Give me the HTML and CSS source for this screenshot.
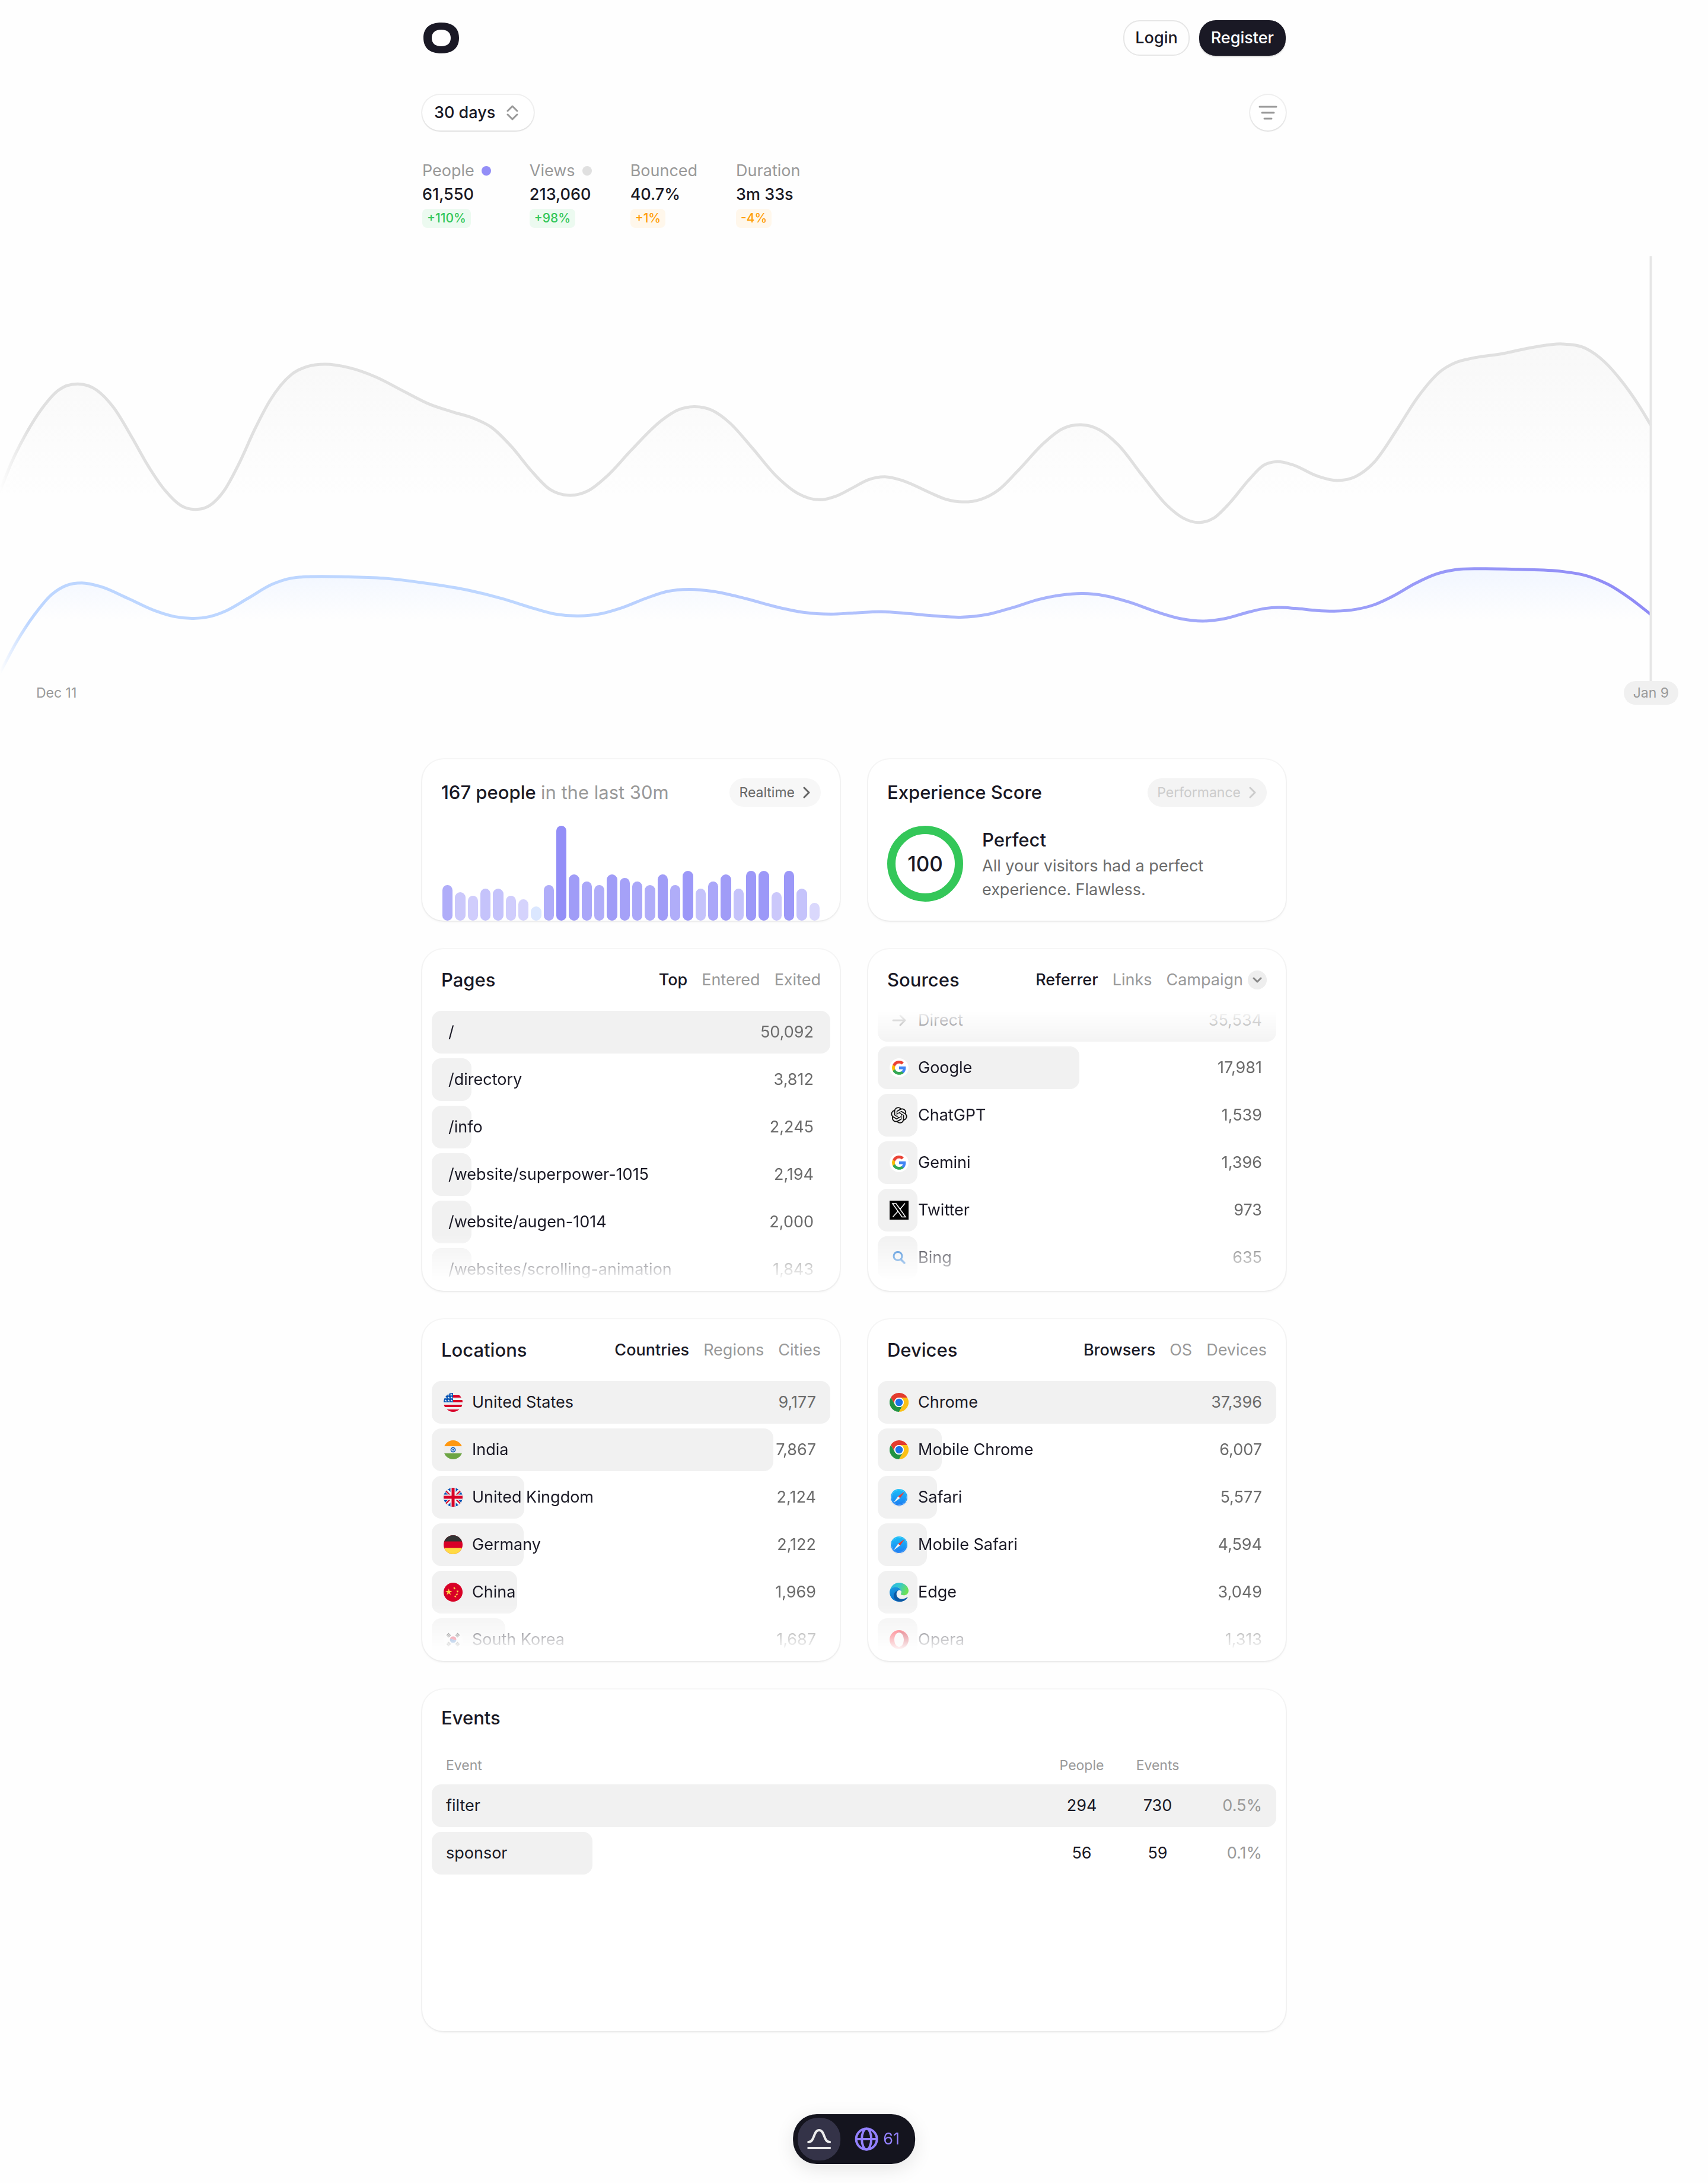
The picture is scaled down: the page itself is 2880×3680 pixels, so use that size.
FILE: index.html
```html
<!DOCTYPE html>
<html lang="en">
<head>
  <meta charset="utf-8">
  <title>Analytics</title>
  <link rel="stylesheet" href="styles.css">
</head>
<body>

<!-- icon set -->
<svg class="sprite" aria-hidden="true">
  <defs>
    <linearGradient id="safariBlue" x1="0" y1="0" x2="0" y2="1">
      <stop offset="0" stop-color="#19c1f8"/>
      <stop offset="1" stop-color="#1d7cf2"/>
    </linearGradient>
    <linearGradient id="edgeTop" x1="0" y1="0" x2="1" y2="0.4">
      <stop offset="0" stop-color="#2bb4e6"/>
      <stop offset="0.5" stop-color="#34c7cf"/>
      <stop offset="1" stop-color="#6be05a"/>
    </linearGradient>
    <linearGradient id="edgeLeft" x1="0" y1="0" x2="0.4" y2="1">
      <stop offset="0" stop-color="#1b9de2"/>
      <stop offset="1" stop-color="#0a6fcb"/>
    </linearGradient>
    <linearGradient id="operaRed" x1="0" y1="0" x2="0" y2="1">
      <stop offset="0" stop-color="#ff1b2d"/>
      <stop offset="1" stop-color="#e0101f"/>
    </linearGradient>
    <clipPath id="round"><circle cx="16" cy="16" r="16"/></clipPath>
  </defs>

  <symbol id="chevron-right" viewBox="0 0 12 20">
    <path d="M2 2l8 8-8 8" fill="none" stroke="currentColor" stroke-width="3" stroke-linecap="round" stroke-linejoin="round"/>
  </symbol>

  <symbol id="google" viewBox="0 0 32 32">
    <circle cx="16" cy="16" r="16" fill="#fff"/>
    <g transform="translate(3 3) scale(1.08)">
      <path fill="#4285f4" d="M22.56 12.25c0-.78-.07-1.53-.2-2.25H12v4.26h5.92c-.26 1.37-1.04 2.53-2.21 3.31v2.77h3.57c2.08-1.92 3.28-4.74 3.28-8.09z"/>
      <path fill="#34a853" d="M12 23c2.97 0 5.46-.98 7.28-2.66l-3.57-2.77c-.98.66-2.23 1.06-3.71 1.06-2.86 0-5.29-1.93-6.16-4.53H2.18v2.84C3.99 20.53 7.7 23 12 23z"/>
      <path fill="#fbbc05" d="M5.84 14.09c-.22-.66-.35-1.36-.35-2.09s.13-1.43.35-2.09V7.07H2.18C1.43 8.55 1 10.22 1 12s.43 3.45 1.18 4.93l2.85-2.22.81-.62z"/>
      <path fill="#ea4335" d="M12 5.38c1.62 0 3.06.56 4.21 1.64l3.15-3.15C17.45 2.09 14.97 1 12 1 7.7 1 3.99 3.47 2.18 7.07l3.66 2.84c.87-2.6 3.3-4.53 6.16-4.53z"/>
    </g>
  </symbol>

  <symbol id="chatgpt" viewBox="-2 -2 28 28">
    <path fill="#111" d="M22.2819 9.8211a5.9847 5.9847 0 0 0-.5157-4.9108 6.0462 6.0462 0 0 0-6.5098-2.9A6.0651 6.0651 0 0 0 4.9807 4.1818a5.9847 5.9847 0 0 0-3.9977 2.9 6.0462 6.0462 0 0 0 .7427 7.0966 5.98 5.98 0 0 0 .511 4.9107 6.051 6.051 0 0 0 6.5146 2.9001A5.9847 5.9847 0 0 0 13.2599 24a6.0557 6.0557 0 0 0 5.7718-4.2058 5.9894 5.9894 0 0 0 3.9977-2.9001 6.0557 6.0557 0 0 0-.7475-7.0729zm-9.022 12.6081a4.4755 4.4755 0 0 1-2.8764-1.0408l.1419-.0804 4.7783-2.7582a.7948.7948 0 0 0 .3927-.6813v-6.7369l2.02 1.1686a.071.071 0 0 1 .038.052v5.5826a4.504 4.504 0 0 1-4.4945 4.4944zm-9.6607-4.1254a4.4708 4.4708 0 0 1-.5346-3.0137l.142.0852 4.783 2.7582a.7712.7712 0 0 0 .7806 0l5.8428-3.3685v2.3324a.0804.0804 0 0 1-.0332.0615L9.74 19.9502a4.4992 4.4992 0 0 1-6.1408-1.6464zM2.3408 7.8956a4.485 4.485 0 0 1 2.3655-1.9728V11.6a.7664.7664 0 0 0 .3879.6765l5.8144 3.3543-2.0201 1.1685a.0757.0757 0 0 1-.071 0l-4.8303-2.7865A4.504 4.504 0 0 1 2.3408 7.872zm16.5963 3.8558L13.1038 8.364 15.1192 7.2a.0757.0757 0 0 1 .071 0l4.8303 2.7913a4.4944 4.4944 0 0 1-.6765 8.1042v-5.6772a.79.79 0 0 0-.407-.667zm2.0107-3.0231l-.142-.0852-4.7735-2.7818a.7759.7759 0 0 0-.7854 0L9.409 9.2297V6.8974a.0662.0662 0 0 1 .0284-.0615l4.8303-2.7866a4.4992 4.4992 0 0 1 6.6802 4.66zM8.3065 12.863l-2.02-1.1638a.0804.0804 0 0 1-.038-.0567V6.0742a4.4992 4.4992 0 0 1 7.3757-3.4537l-.142.0805L8.704 5.459a.7948.7948 0 0 0-.3927.6813zm1.0976-2.3654l2.602-1.4998 2.6069 1.4998v2.9994l-2.5974 1.4997-2.6067-1.4997Z"/>
  </symbol>

  <symbol id="twitter" viewBox="0 0 32 32">
    <rect width="32" height="32" fill="#000"/>
    <path d="M5 5h6l16 22.500h-6zM26 4.500L17.500 14.500M14 18L5.500 27.500" fill="none" stroke="#fff" stroke-width="1.500"/>
  </symbol>

  <symbol id="bing" viewBox="0 0 32 32">
    <circle cx="14" cy="13.500" r="7" fill="none" stroke="#1a73d1" stroke-width="3"/>
    <path d="M19 19l6 6" stroke="#1a73d1" stroke-width="3.500" stroke-linecap="round"/>
  </symbol>

  <symbol id="direct" viewBox="0 0 32 32">
    <path d="M6 16h20M18 8l8 8-8 8" fill="none" stroke="#777" stroke-width="3" stroke-linecap="round" stroke-linejoin="round"/>
  </symbol>

  <symbol id="us" viewBox="0 0 32 32">
    <g clip-path="url(#round)">
      <path fill="#eee" d="M0 0h32v32H0z"/>
      <path fill="#d80027" d="M16 4h16v4H16zM16 12h16v4H16zM0 20h32v4H0zM0 28h32v4H0z"/>
      <path fill="#0052b4" d="M0 0h16v16H0z"/>
      <path fill="#eee" d="M8 1l.6 1.400h1.500l-1.200 1 .5 1.500L8 4l-1.400.9.500-1.500-1.200-1h1.500zM13 1l.6 1.400h1.500l-1.200 1 .5 1.500L13 4l-1.400.9.500-1.500-1.200-1h1.500zM3.500 6l.6 1.400h1.500l-1.200 1 .5 1.500L3.500 9l-1.400.9.500-1.500-1.200-1h1.500zM8.500 6l.6 1.400h1.500l-1.200 1 .5 1.500L8.500 9l-1.400.9.500-1.500-1.200-1h1.500zM13.500 6l.6 1.400H15.600l-1.200 1 .5 1.500L13.500 9l-1.400.9.500-1.500-1.200-1h1.500zM3.500 11l.6 1.400h1.500l-1.200 1 .5 1.500-1.400-.9-1.400.9.500-1.500-1.200-1h1.500zM8.500 11l.6 1.400h1.500l-1.200 1 .5 1.500-1.400-.9-1.400.9.500-1.500-1.200-1h1.500zM13.500 11l.6 1.400h1.500l-1.200 1 .5 1.500-1.400-.9-1.400.9.500-1.500-1.200-1h1.500z"/>
    </g>
  </symbol>

  <symbol id="india" viewBox="0 0 32 32">
    <g clip-path="url(#round)">
      <path fill="#eee" d="M0 0h32v32H0z"/>
      <path fill="#ff9811" d="M0 0h32v10H0z"/>
      <path fill="#6da544" d="M0 22h32v10H0z"/>
      <circle cx="16" cy="16" r="3.600" fill="#fff" stroke="#0052b4" stroke-width="1.600"/>
      <circle cx="16" cy="16" r="1.500" fill="#0052b4"/>
    </g>
  </symbol>

  <symbol id="uk" viewBox="0 0 32 32">
    <g clip-path="url(#round)">
      <path fill="#0052b4" d="M0 0h32v32H0z"/>
      <path stroke="#f0f0f0" stroke-width="6.500" d="M0 0l32 32M32 0L0 32"/>
      <path stroke="#d80027" stroke-width="2.200" d="M0 1.500l13 13M19 17.500l13 13M32 1.500l-13 13M13 17.500l-13 13"/>
      <path stroke="#f0f0f0" stroke-width="9" d="M16 0v32M0 16h32"/>
      <path stroke="#d80027" stroke-width="5" d="M16 0v32M0 16h32"/>
    </g>
  </symbol>

  <symbol id="germany" viewBox="0 0 32 32">
    <g clip-path="url(#round)">
      <path fill="#d80027" d="M0 0h32v32H0z"/>
      <path fill="#333" d="M0 0h32v10.500H0z"/>
      <path fill="#ffda44" d="M0 21.500h32V32H0z"/>
    </g>
  </symbol>

  <symbol id="china" viewBox="0 0 32 32">
    <circle cx="16" cy="16" r="16" fill="#d80027"/>
    <path fill="#ffda44" d="M8.700 10l1.300 4h4.300l-3.500 2.500 1.400 4.100-3.500-2.500-3.500 2.500 1.400-4.100L3.100 14h4.300zM18.900 21l1.100 1.300 1.600-.6-.9 1.500 1.100 1.300-1.700-.4-.9 1.400-.1-1.700-1.700-.4 1.600-.6zM22 17.200l.8 1.500 1.700-.3-1.200 1.200.8 1.600-1.500-.8-1.300 1.200.3-1.700-1.500-.8 1.700-.2zM24.500 12.500l-.2 1.700 1.500.7-1.700.4-.2 1.600-.8-1.400-1.700.3 1.200-1.200-.9-1.500 1.600.7zM19 7.200l-.1 1.700 1.600.6-1.700.4-.1 1.700-.9-1.400-1.600.4 1-1.300-.9-1.500 1.600.6z"/>
  </symbol>

  <symbol id="korea" viewBox="0 0 32 32">
    <circle cx="16" cy="16" r="16" fill="#f6f6f6"/>
    <path fill="#d80027" d="M10.500 16a5.500 5.500 0 0 1 11 0c0 1.500-2.700 2-5.500 0s-5.500-1.500-5.500 0z"/>
    <path fill="#0052b4" d="M10.500 16c0-1.500 2.700-2 5.500 0s5.500 1.500 5.500 0a5.500 5.500 0 0 1-11 0z"/>
    <path stroke="#222" stroke-width="1.400" d="M5 9l4-4M6.500 10.500l4-4M8 12l4-4M23 5l4 4M21.500 6.500l4 4M20 8l4 4M5 23l4 4M6.500 21.500l4 4M8 20l4 4M27 23l-4 4M25.500 21.500l-4 4M24 20l-4 4"/>
  </symbol>

  <symbol id="chrome" viewBox="0 0 48 48">
    <path fill="#e33b2e" d="M3.200 12A24 24 0 0 1 44.800 12H24A12 12 0 0 0 13.600 30z"/>
    <path fill="#229342" d="M3.200 12A24 24 0 0 0 24 48L34.400 30A12 12 0 0 1 13.600 30z"/>
    <path fill="#fbc116" d="M24 48A24 24 0 0 0 44.800 12H24A12 12 0 0 1 34.400 30z"/>
    <circle cx="24" cy="24" r="12" fill="#fff"/>
    <circle cx="24" cy="24" r="9.500" fill="#1a73e8"/>
  </symbol>

  <symbol id="safari" viewBox="0 0 32 32">
    <circle cx="16" cy="16.500" r="15" fill="#c9ccd1"/>
    <circle cx="16" cy="16" r="15" fill="#f3f4f6"/>
    <circle cx="16" cy="16" r="14" fill="url(#safariBlue)"/>
    <circle cx="16" cy="16" r="12.500" fill="none" stroke="#fff" stroke-opacity=".5" stroke-width="1.500" stroke-dasharray=".5 1.400"/>
    <path fill="#f23b30" d="M25.500 6.500L14.400 14.400l3.200 3.200z"/>
    <path fill="#f4f4f4" d="M6.500 25.500l7.900-11.100 3.200 3.200z"/>
  </symbol>

  <symbol id="edge" viewBox="0 0 32 32">
    <path fill="url(#edgeTop)" d="M.6 13.500C2 5.500 8.500 0 16 0c9 0 16 6.500 16 13.500 0 5-4 7.800-8 7.800-3.500 0-5.200-1.200-5.200-2 0-.7 1.200-1.500 1.200-4C20 11.500 16.500 8 11.500 8 6 8 2 10.500.6 13.500z"/>
    <path fill="url(#edgeLeft)" d="M0 16c0-5 4.500-8.500 10-8.500 6.500 0 10 4 10 7.800-.5-1.800-2.500-3-4.500-2.600-3 .6-4.500 4.300-4 7.800C12.300 26 18 30 22 31c-2 .7-4 1-6 1-9 0-16-7-16-16z"/>
    <path fill="#0c59a4" d="M11.500 20c.5 5 5.500 8 10.500 7.500 3.500-.3 6.500-2 7.800-3 .5-.4.900 0 .6.500C27.500 29.500 23 32 18 32 11 31.500 6.500 27 7 21.500c.3-4.500 3.500-7.800 8.500-8.800-3 1.100-4.200 4.300-4 7.300z"/>
  </symbol>

  <symbol id="opera" viewBox="0 0 32 32">
    <path fill="url(#operaRed)" fill-rule="evenodd" d="M16 0a16 16 0 1 0 0 32 16 16 0 0 0 0-32zm0 4c4.500 0 8 5.400 8 12s-3.500 12-8 12-8-5.400-8-12 3.500-12 8-12z"/>
    <path fill="#a70014" d="M12 5.500C13.500 3.500 16 2 18.500 2c7 1 13.500 6 13.500 14s-6.500 13-13.500 14c4-2 5.500-7 5.500-14S21 4 16 4c-1.500 0-3 .5-4 1.500z" opacity=".6"/>
  </symbol>
</svg>

<div class="container">
  <header class="topbar">
    <a href="#" class="logo" aria-label="Home">
      <svg viewBox="0 0 60 52" width="60" height="52">
        <path fill="#1a1925" fill-rule="evenodd" d="M30 0C49 0 60 9 60 26S49 52 30 52 0 43 0 26 11 0 30 0zM30 12C20 12 14 17 14 26s6 14 16 14 16-5 16-14-6-14-16-14z"/>
      </svg>
    </a>
    <div class="auth">
      <a href="#" class="btn">Login</a>
      <a href="#" class="btn btn-dark">Register</a>
    </div>
  </header>

  <div class="toolbar">
    <div class="range">
      <select aria-label="Date range">
        <option>30 days</option>
      </select>
      <svg viewBox="0 0 20 26" width="20" height="26">
        <path d="M2 10l8-8 8 8M2 16l8 8 8-8" fill="none" stroke="#999" stroke-width="3" stroke-linecap="round" stroke-linejoin="round"/>
      </svg>
    </div>
    <button class="filter" aria-label="Filter">
      <svg viewBox="0 0 32 24" width="32" height="24">
        <path d="M2 2h28M6 12h20M10 22h12" stroke="#999" stroke-width="3" stroke-linecap="round"/>
      </svg>
    </button>
  </div>

  <div class="stats">
    <div class="stat">
      <div class="stat-label">People <span class="dot"></span></div>
      <div class="stat-value">61,550</div>
      <span class="badge">+110%</span>
    </div>
    <div class="stat">
      <div class="stat-label">Views <span class="dot dot-grey"></span></div>
      <div class="stat-value">213,060</div>
      <span class="badge">+98%</span>
    </div>
    <div class="stat">
      <div class="stat-label">Bounced</div>
      <div class="stat-value">40.7%</div>
      <span class="badge badge-orange">+1%</span>
    </div>
    <div class="stat">
      <div class="stat-label">Duration</div>
      <div class="stat-value">3m 33s</div>
      <span class="badge badge-orange">-4%</span>
    </div>
  </div>
</div>

<div class="chart">
  <svg class="chart-svg" viewBox="0 24 3136 1404" preserveAspectRatio="none">
    <defs>
      <linearGradient id="viewsFill" gradientUnits="userSpaceOnUse" x1="0" y1="310" x2="0" y2="820">
        <stop offset="0" stop-color="#f8f8f8"/>
        <stop offset="1" stop-color="#fefefe"/>
      </linearGradient>
      <linearGradient id="peopleFill" gradientUnits="userSpaceOnUse" x1="0" y1="1055" x2="0" y2="1225">
        <stop offset="0" stop-color="#f1f6ff"/>
        <stop offset="1" stop-color="#fefefe"/>
      </linearGradient>
      <linearGradient id="peopleLine" gradientUnits="userSpaceOnUse" x1="0" y1="0" x2="3031" y2="0">
        <stop offset="0.33" stop-color="#bdd6ff"/>
        <stop offset="1" stop-color="#8f8af6"/>
      </linearGradient>
    </defs>
    <path id="viewsArea" fill="url(#viewsFill)"/>
    <path id="viewsLine" class="line" stroke="#e0e0e0"/>
    <path id="peopleArea" fill="url(#peopleFill)"/>
    <path id="peoplePath" class="line" stroke="url(#peopleLine)"/>
    <path class="marker" d="M3031 24V1428"/>
  </svg>
  <div class="chart-dates">
    <span>Dec 11</span>
    <span class="date-pill">Jan 9</span>
  </div>
</div>

<main class="container grid">

  <section class="card">
    <div class="card-head">
      <h2>167 people <span class="muted">in the last 30m</span></h2>
      <a href="#" class="pill">Realtime <svg width="12" height="20"><use href="#chevron-right"/></svg></a>
    </div>
    <div class="bars" id="bars"></div>
  </section>

  <section class="card">
    <div class="card-head">
      <h2>Experience Score</h2>
      <button class="pill" disabled>Performance <svg width="12" height="20"><use href="#chevron-right"/></svg></button>
    </div>
    <div class="score">
      <div class="ring">100</div>
      <div>
        <h3>Perfect</h3>
        <p>All your visitors had a perfect experience. Flawless.</p>
      </div>
    </div>
  </section>

  <section class="card">
    <div class="card-head">
      <h2>Pages</h2>
      <div class="tabs">
        <button class="active">Top</button>
        <button>Entered</button>
        <button>Exited</button>
      </div>
    </div>
    <div class="list">
      <ul class="plain">
        <li><i class="fill" style="width: 100%"></i><span>/</span><b>50,092</b></li>
        <li><i class="fill" style="width: 10%"></i><span>/directory</span><b>3,812</b></li>
        <li><i class="fill" style="width: 10%"></i><span>/info</span><b>2,245</b></li>
        <li><i class="fill" style="width: 10%"></i><span>/website/superpower-1015</span><b>2,194</b></li>
        <li><i class="fill" style="width: 10%"></i><span>/website/augen-1014</span><b>2,000</b></li>
        <li><i class="fill" style="width: 10%"></i><span>/websites/scrolling-animation</span><b>1,843</b></li>
      </ul>
    </div>
  </section>

  <section class="card">
    <div class="card-head">
      <h2>Sources</h2>
      <div class="tabs">
        <button class="active">Referrer</button>
        <button>Links</button>
        <button>Campaign
          <span class="more"><svg viewBox="0 0 16 10" width="16" height="10"><path d="M2 2l6 6 6-6" fill="none" stroke="#888" stroke-width="3" stroke-linecap="round" stroke-linejoin="round"/></svg></span>
        </button>
      </div>
    </div>
    <div class="list scrolled">
      <ul>
        <li><i class="fill" style="width: 100%"></i><svg class="ico"><use href="#direct"/></svg><span>Direct</span><b>35,534</b></li>
        <li><i class="fill" style="width: 50.6%"></i><svg class="ico"><use href="#google"/></svg><span>Google</span><b>17,981</b></li>
        <li><i class="fill" style="width: 10%"></i><svg class="ico"><use href="#chatgpt"/></svg><span>ChatGPT</span><b>1,539</b></li>
        <li><i class="fill" style="width: 10%"></i><svg class="ico"><use href="#google"/></svg><span>Gemini</span><b>1,396</b></li>
        <li><i class="fill" style="width: 10%"></i><svg class="ico"><use href="#twitter"/></svg><span>Twitter</span><b>973</b></li>
        <li><i class="fill" style="width: 10%"></i><svg class="ico"><use href="#bing"/></svg><span>Bing</span><b>635</b></li>
      </ul>
    </div>
  </section>

  <section class="card">
    <div class="card-head">
      <h2>Locations</h2>
      <div class="tabs">
        <button class="active">Countries</button>
        <button>Regions</button>
        <button>Cities</button>
      </div>
    </div>
    <div class="list">
      <ul>
        <li><i class="fill" style="width: 100%"></i><svg class="ico"><use href="#us"/></svg><span>United States</span><b>9,177</b></li>
        <li><i class="fill" style="width: 85.7%"></i><svg class="ico"><use href="#india"/></svg><span>India</span><b>7,867</b></li>
        <li><i class="fill" style="width: 23.2%"></i><svg class="ico"><use href="#uk"/></svg><span>United Kingdom</span><b>2,124</b></li>
        <li><i class="fill" style="width: 23.1%"></i><svg class="ico"><use href="#germany"/></svg><span>Germany</span><b>2,122</b></li>
        <li><i class="fill" style="width: 21.4%"></i><svg class="ico"><use href="#china"/></svg><span>China</span><b>1,969</b></li>
        <li><i class="fill" style="width: 18.4%"></i><svg class="ico"><use href="#korea"/></svg><span>South Korea</span><b>1,687</b></li>
      </ul>
    </div>
  </section>

  <section class="card">
    <div class="card-head">
      <h2>Devices</h2>
      <div class="tabs">
        <button class="active">Browsers</button>
        <button>OS</button>
        <button>Devices</button>
      </div>
    </div>
    <div class="list">
      <ul>
        <li><i class="fill" style="width: 100%"></i><svg class="ico"><use href="#chrome"/></svg><span>Chrome</span><b>37,396</b></li>
        <li><i class="fill" style="width: 16%"></i><svg class="ico"><use href="#chrome"/></svg><span>Mobile Chrome</span><b>6,007</b></li>
        <li><i class="fill" style="width: 14.9%"></i><svg class="ico"><use href="#safari"/></svg><span>Safari</span><b>5,577</b></li>
        <li><i class="fill" style="width: 12.3%"></i><svg class="ico"><use href="#safari"/></svg><span>Mobile Safari</span><b>4,594</b></li>
        <li><i class="fill" style="width: 10%"></i><svg class="ico"><use href="#edge"/></svg><span>Edge</span><b>3,049</b></li>
        <li><i class="fill" style="width: 10%"></i><svg class="ico"><use href="#opera"/></svg><span>Opera</span><b>1,313</b></li>
      </ul>
    </div>
  </section>

  <section class="card wide">
    <h2>Events</h2>
    <table>
      <thead>
        <tr><th>Event</th><th class="num">People</th><th class="num">Events</th><th class="pct"></th></tr>
      </thead>
      <tbody>
        <tr><td><i class="fill" style="width: 100%"></i>filter</td><td class="num">294</td><td class="num">730</td><td class="pct">0.5%</td></tr>
        <tr><td><i class="fill" style="width: 19%"></i>sponsor</td><td class="num">56</td><td class="num">59</td><td class="pct">0.1%</td></tr>
      </tbody>
    </table>
  </section>
</main>

<nav class="dock">
  <button class="dock-item active" aria-label="Overview">
    <svg viewBox="0 0 40 36" width="40" height="36">
      <path d="M2 23C13 23 10 3 20 3s7 20 18 20M2 33h36" fill="none" stroke="#ececec" stroke-width="4" stroke-linecap="round"/>
    </svg>
  </button>
  <button class="dock-item live">
    <svg viewBox="0 0 40 40" width="40" height="40">
      <g fill="none" stroke="#9381ff" stroke-width="4">
        <circle cx="20" cy="20" r="17.500"/>
        <ellipse cx="20" cy="20" rx="8" ry="17.500"/>
        <path d="M3 20h34"/>
      </g>
    </svg>
    61
  </button>
</nav>

<script src="script.js"></script>
</body>
</html>
```
FILE: styles.css
```css
* {
  box-sizing: border-box;
}

body {
  margin: 0;
  background: #fefefe;
  color: #1a1925;
  font-family: Inter, "Liberation Sans", sans-serif;
  font-size: 27px;
  line-height: 40px;
}

h2, h3, p, ul {
  margin: 0;
  padding: 0;
}

button, select {
  font: inherit;
  color: inherit;
  border: none;
  background: none;
  margin: 0;
  padding: 0;
  cursor: pointer;
}

a {
  color: inherit;
  text-decoration: none;
}

.sprite {
  position: absolute;
  width: 0;
  height: 0;
}

.container {
  max-width: 1456px;
  margin: 0 auto;
}

/* header */
.topbar {
  display: flex;
  align-items: center;
  justify-content: space-between;
  padding: 34px 0;
}

.logo {
  display: flex;
  padding-left: 2px;
}

.auth {
  display: flex;
  gap: 16px;
}

.btn {
  height: 60px;
  line-height: 56px;
  padding: 0 18px;
  border: 2px solid #e6e6e6;
  border-radius: 28px;
  font-weight: 500;
}

.btn-dark {
  background: #1a1925;
  border-color: #1a1925;
  color: #fff;
  box-shadow: 0 2px 2px rgba(0, 0, 0, 0.15);
}

.toolbar {
  display: flex;
  justify-content: space-between;
  margin-top: 32px;
}

.range {
  position: relative;
}

.range select {
  appearance: none;
  height: 60px;
  padding: 0 64px 0 20px;
  font-weight: 500;
}

.range svg {
  position: absolute;
  top: 17px;
  right: 26px;
  pointer-events: none;
}

.range select, .filter {
  background: #fff;
  border-radius: 30px;
  box-shadow: 0 0 0 2px rgba(0, 0, 0, 0.06), 0 2px 2px rgba(0, 0, 0, 0.06);
}

.filter {
  display: flex;
  align-items: center;
  justify-content: center;
  width: 60px;
  height: 60px;
}

/* totals */
.stats {
  display: flex;
  gap: 65px;
  margin-top: 48px;
}

.stat-label {
  display: flex;
  align-items: center;
  gap: 12px;
  color: #999;
}

.dot {
  width: 16px;
  height: 16px;
  border-radius: 50%;
  background: #938ef7;
}

.dot-grey {
  background: #e0e0e0;
}

.stat-value {
  font-weight: 500;
}

.badge {
  display: block;
  width: fit-content;
  margin-top: 4px;
  padding: 0 8px;
  border-radius: 8px;
  background: #ecfaf0;
  color: #34c759;
  font-size: 21px;
  font-weight: 500;
  line-height: 32px;
}

.badge-orange {
  background: #fff7eb;
  color: #ff9f0a;
}

/* chart */
.chart {
  position: relative;
  margin-top: 48px;
}

.chart::before {
  content: "";
  position: absolute;
  top: 0;
  left: 0;
  width: 48px;
  height: 100%;
  background: linear-gradient(to right, #fefefe, rgba(254, 254, 254, 0));
}

.chart-svg {
  display: block;
  width: 100%;
  height: 716px;
}

.line {
  fill: none;
  stroke-width: 5px;
  vector-effect: non-scaling-stroke;
}

.marker {
  stroke: #e6e6e6;
  stroke-width: 4px;
  vector-effect: non-scaling-stroke;
}

.chart-dates {
  display: flex;
  justify-content: space-between;
  padding: 0 50px 0 61px;
  color: #999;
  font-size: 23px;
}

.date-pill {
  padding: 0 16px;
  border-radius: 20px;
  background: #f0f0f0;
}

/* cards */
.grid {
  display: grid;
  grid-template-columns: 1fr 1fr;
  gap: 48px;
  margin-top: 92px;
  padding-bottom: 256px;
}

.card {
  display: flex;
  flex-direction: column;
  padding: 32px 16px 0;
  overflow: hidden;
  background: #fff;
  border-radius: 36px;
  box-shadow: 0 0 0 2px rgba(0, 0, 0, 0.03), 0 2px 4px rgba(0, 0, 0, 0.06);
}

.wide {
  grid-column: 1 / -1;
  min-height: 576px;
}

.card-head {
  display: flex;
  align-items: center;
  justify-content: space-between;
  padding: 0 16px;
}

h2, h3 {
  font-size: 31px;
  font-weight: 500;
}

.muted {
  color: #999;
  font-weight: 400;
}

.pill {
  display: flex;
  align-items: center;
  gap: 14px;
  height: 48px;
  padding: 0 18px 0 16px;
  border-radius: 24px;
  background: #f7f7f7;
  color: #666;
  font-size: 23px;
}

.pill:disabled {
  background: #f4f4f4;
  color: #ccc;
}

.bars {
  display: flex;
  align-items: flex-end;
  gap: 4px;
  height: 192px;
  padding: 0 18px;
}

.bar {
  flex: 1;
  border-radius: 10px;
}

.score {
  display: flex;
  gap: 32px;
  padding: 32px 16px;
}

.ring {
  display: flex;
  align-items: center;
  justify-content: center;
  flex: none;
  width: 128px;
  height: 128px;
  border: 14px solid #34c759;
  border-radius: 50%;
  font-size: 35px;
  font-weight: 500;
}

.score h3 {
  margin: 4px 0;
}

.score p {
  max-width: 400px;
  color: #6b6b6b;
}

.tabs {
  display: flex;
  gap: 24px;
}

.tabs button {
  display: flex;
  align-items: center;
  gap: 8px;
  color: #999;
}

.tabs .active {
  color: #1a1925;
  font-weight: 500;
}

.more {
  display: flex;
  align-items: center;
  justify-content: center;
  width: 32px;
  height: 32px;
  border-radius: 50%;
  background: #eee;
}

/* ranked lists */
.list {
  height: 456px;
  margin: 32px 0 16px;
  overflow: hidden;
  mask-image: linear-gradient(to bottom, #000 calc(100% - 80px), transparent);
}

.scrolled {
  mask-image: linear-gradient(to bottom, transparent, #000 64px, #000 calc(100% - 80px), transparent);
}

.list ul {
  display: flex;
  flex-direction: column;
  gap: 8px;
  list-style: none;
}

.scrolled ul {
  margin-top: -20px;
}

.list li {
  position: relative;
  display: flex;
  align-items: center;
  gap: 16px;
  height: 72px;
  padding: 0 24px 0 20px;
}

.plain li {
  padding: 0 28px;
}

.fill {
  position: absolute;
  top: 0;
  left: 0;
  z-index: -1;
  height: 100%;
  border-radius: 16px;
  background: #f1f1f1;
}

.list, tbody tr, .list li {
  isolation: isolate;
}

.ico {
  flex: none;
  width: 32px;
  height: 32px;
}

.list b {
  margin-left: auto;
  color: #6b6b6b;
  font-weight: 400;
}

/* events */
.wide h2 {
  padding: 0 16px;
  line-height: 32px;
}

table {
  width: 100%;
  margin-top: 32px;
  border-spacing: 0 8px;
}

tbody tr {
  position: relative;
  z-index: 0;
}

th {
  height: 48px;
  padding: 0 24px;
  color: #999;
  font-size: 23px;
  font-weight: 400;
  text-align: left;
}

td {
  height: 72px;
  padding: 0 24px;
}

.num {
  width: 128px;
  padding: 0;
  text-align: center;
}

.pct {
  width: 136px;
  color: #999;
  text-align: right;
}

/* bottom dock */
.dock {
  position: fixed;
  bottom: 32px;
  left: 50%;
  display: flex;
  padding: 6px 8px;
  border-radius: 40px;
  background: #14141e;
  box-shadow: 0 8px 32px rgba(0, 0, 0, 0.1);
  transform: translateX(-50%);
}

.dock-item {
  display: flex;
  align-items: center;
  justify-content: center;
  gap: 8px;
  height: 72px;
  border-radius: 34px;
}

.dock-item.active {
  width: 72px;
  background: #343348;
}

.live {
  padding: 0 18px 0 24px;
  color: #9381ff;
}
```
FILE: script.js
```javascript
// curve points, x / y in chart units
var views = [
  [-20, 880], [3, 785], [22, 702], [48, 610], [78, 525], [107, 467], [143, 446], [178, 467], [209, 525], [243, 625],
  [272, 717], [304, 800], [332, 848], [358, 861], [385, 848], [411, 800], [440, 705], [468, 595], [496, 500],
  [535, 415], [565, 388], [597, 381], [640, 392], [690, 423], [740, 469], [790, 514], [830, 538], [870, 560],
  [902, 589], [940, 655], [975, 732], [1010, 795], [1044, 814], [1080, 799], [1115, 750], [1160, 663], [1215, 566],
  [1245, 532], [1275, 521], [1307, 533], [1340, 575], [1380, 655], [1425, 750], [1465, 808], [1508, 829],
  [1535, 817], [1568, 787], [1594, 763], [1625, 753], [1658, 766], [1708, 806], [1738, 828], [1768, 836],
  [1800, 828], [1833, 797], [1868, 735], [1918, 639], [1950, 595], [1985, 581], [2018, 597], [2053, 647],
  [2098, 750], [2143, 848], [2173, 890], [2202, 904], [2228, 890], [2258, 839], [2293, 763], [2320, 715],
  [2345, 703], [2373, 713], [2418, 750], [2455, 765], [2488, 753], [2523, 705], [2563, 602], [2603, 490],
  [2643, 407], [2673, 375], [2703, 361], [2758, 346], [2818, 324], [2869, 314], [2913, 330], [2946, 373],
  [2978, 438], [3008, 514], [3031, 582]
];

var people = [
  [-20, 1465], [3, 1390], [30, 1300], [62, 1212], [95, 1142], [122, 1112], [150, 1104], [185, 1116], [235, 1155],
  [285, 1196], [320, 1215], [355, 1221], [385, 1215], [415, 1196], [455, 1155], [500, 1108], [535, 1088],
  [570, 1083], [640, 1084], [710, 1089], [775, 1103], [860, 1128], [925, 1157], [980, 1188], [1020, 1207],
  [1062, 1213], [1102, 1206], [1140, 1187], [1190, 1152], [1225, 1132], [1265, 1125], [1310, 1132], [1370, 1156],
  [1430, 1185], [1475, 1201], [1525, 1207], [1568, 1203], [1618, 1199], [1668, 1205], [1718, 1213], [1763, 1217],
  [1813, 1208], [1858, 1186], [1908, 1158], [1948, 1144], [1988, 1139], [2028, 1146], [2073, 1167], [2123, 1199],
  [2168, 1222], [2208, 1230], [2248, 1222], [2293, 1200], [2323, 1188], [2348, 1185], [2378, 1188], [2418, 1195],
  [2450, 1197], [2490, 1191], [2523, 1176], [2558, 1147], [2598, 1106], [2638, 1074], [2673, 1060], [2718, 1057],
  [2788, 1059], [2868, 1066], [2913, 1080], [2953, 1109], [2993, 1155], [3031, 1208]
];

function slope(a, b) {
  return (b[1] - a[1]) / (b[0] - a[0]);
}

// tangent at every point, weighted by the distance to both neighbours
function tangents(pts) {
  return pts.map(function (p, i) {
    var prev = pts[i - 1];
    var next = pts[i + 1];
    if (!prev) return slope(p, next);
    if (!next) return slope(prev, p);
    var h0 = p[0] - prev[0];
    var h1 = next[0] - p[0];
    return (h1 * slope(prev, p) + h0 * slope(p, next)) / (h0 + h1);
  });
}

// smooth path through the points
function curve(pts) {
  var m = tangents(pts);
  var d = "M" + pts[0];
  for (var i = 0; i < pts.length - 1; i++) {
    var a = pts[i];
    var b = pts[i + 1];
    var h = (b[0] - a[0]) / 3;
    d += "C" + (a[0] + h) + "," + (a[1] + m[i] * h) +
      " " + (b[0] - h) + "," + (b[1] - m[i + 1] * h) +
      " " + b;
  }
  return d;
}

function draw(pts, lineId, areaId) {
  var d = curve(pts);
  document.getElementById(lineId).setAttribute("d", d);
  document.getElementById(areaId).setAttribute("d", d + "V1428H-20Z");
}

draw(views, "viewsLine", "viewsArea");
draw(people, "peoplePath", "peopleArea");

// people per minute, last 30 minutes
var minutes = [10, 8, 7, 9, 9, 7, 6, 4, 10, 27, 13, 11, 10, 13, 12, 11, 10, 13, 10, 14, 9, 11, 13, 9, 14, 14, 8, 14, 9, 5];
var shades = {
  4: "#dbe7ff", 5: "#dad8fc", 6: "#d5d3fc", 7: "#d0cdfc", 8: "#cbc8fb", 9: "#c5c3fb", 10: "#b0adf9",
  11: "#aaa7f9", 12: "#a5a1f8", 13: "#a09cf7", 14: "#9c98f8", 27: "#938ef7"
};
var bars = document.getElementById("bars");

minutes.forEach(function (n) {
  var bar = document.createElement("div");
  bar.className = "bar";
  bar.style.height = Math.min(n * 6, 160) + "px";
  bar.style.background = shades[n];
  bars.appendChild(bar);
});
```
